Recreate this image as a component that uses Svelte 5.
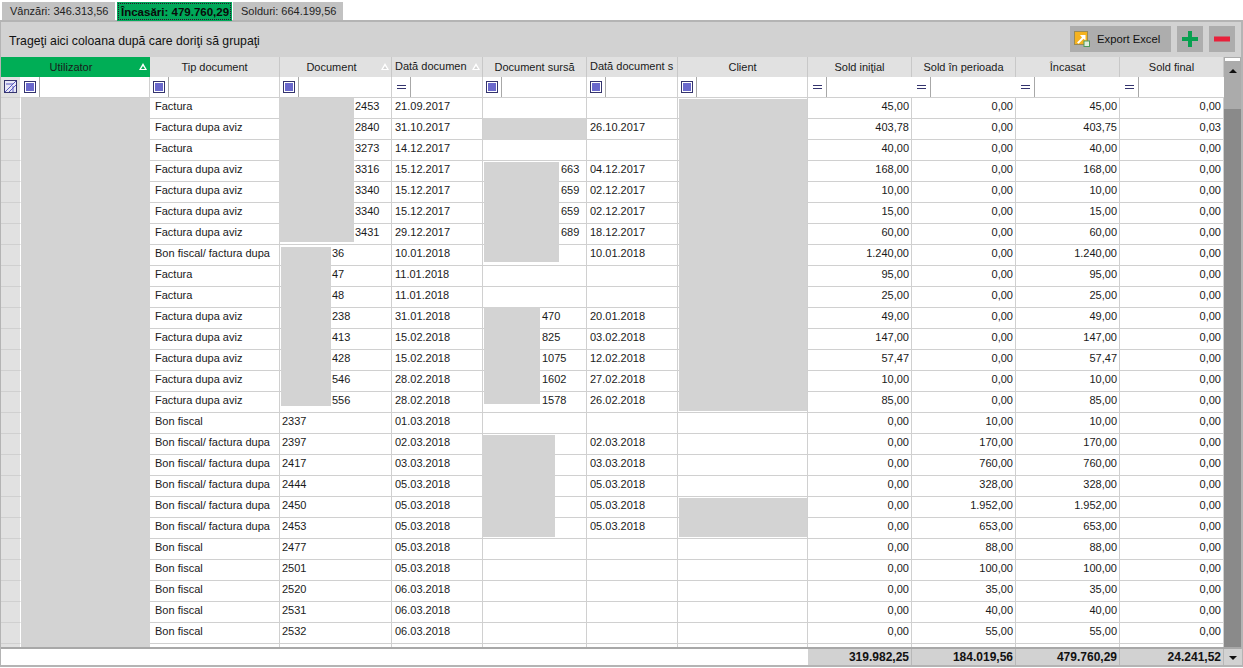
<script>
    // tip, document, padding of the number, date, source doc, its padding, source date, then the four amounts
    const rows = [
        ['Factura', '2453', 74, '21.09.2017', '', 0, '', '45,00', '0,00', '45,00', '0,00'],
        ['Factura dupa aviz', '2840', 74, '31.10.2017', '', 0, '26.10.2017', '403,78', '0,00', '403,75', '0,03'],
        ['Factura', '3273', 74, '14.12.2017', '', 0, '', '40,00', '0,00', '40,00', '0,00'],
        ['Factura dupa aviz', '3316', 74, '15.12.2017', '663', 77, '04.12.2017', '168,00', '0,00', '168,00', '0,00'],
        ['Factura dupa aviz', '3340', 74, '15.12.2017', '659', 77, '02.12.2017', '10,00', '0,00', '10,00', '0,00'],
        ['Factura dupa aviz', '3340', 74, '15.12.2017', '659', 77, '02.12.2017', '15,00', '0,00', '15,00', '0,00'],
        ['Factura dupa aviz', '3431', 74, '29.12.2017', '689', 77, '18.12.2017', '60,00', '0,00', '60,00', '0,00'],
        ['Bon fiscal/ factura dupa', '36', 51, '10.01.2018', '', 0, '10.01.2018', '1.240,00', '0,00', '1.240,00', '0,00'],
        ['Factura', '47', 51, '11.01.2018', '', 0, '', '95,00', '0,00', '95,00', '0,00'],
        ['Factura', '48', 51, '11.01.2018', '', 0, '', '25,00', '0,00', '25,00', '0,00'],
        ['Factura dupa aviz', '238', 51, '31.01.2018', '470', 58, '20.01.2018', '49,00', '0,00', '49,00', '0,00'],
        ['Factura dupa aviz', '413', 51, '15.02.2018', '825', 58, '03.02.2018', '147,00', '0,00', '147,00', '0,00'],
        ['Factura dupa aviz', '428', 51, '15.02.2018', '1075', 58, '12.02.2018', '57,47', '0,00', '57,47', '0,00'],
        ['Factura dupa aviz', '546', 51, '28.02.2018', '1602', 58, '27.02.2018', '10,00', '0,00', '10,00', '0,00'],
        ['Factura dupa aviz', '556', 51, '28.02.2018', '1578', 58, '26.02.2018', '85,00', '0,00', '85,00', '0,00'],
        ['Bon fiscal', '2337', 1, '01.03.2018', '', 0, '', '0,00', '10,00', '10,00', '0,00'],
        ['Bon fiscal/ factura dupa', '2397', 1, '02.03.2018', '', 0, '02.03.2018', '0,00', '170,00', '170,00', '0,00'],
        ['Bon fiscal/ factura dupa', '2417', 1, '03.03.2018', '', 0, '03.03.2018', '0,00', '760,00', '760,00', '0,00'],
        ['Bon fiscal/ factura dupa', '2444', 1, '05.03.2018', '', 0, '05.03.2018', '0,00', '328,00', '328,00', '0,00'],
        ['Bon fiscal/ factura dupa', '2450', 1, '05.03.2018', '', 0, '05.03.2018', '0,00', '1.952,00', '1.952,00', '0,00'],
        ['Bon fiscal/ factura dupa', '2453', 1, '05.03.2018', '', 0, '05.03.2018', '0,00', '653,00', '653,00', '0,00'],
        ['Bon fiscal', '2477', 1, '05.03.2018', '', 0, '', '0,00', '88,00', '88,00', '0,00'],
        ['Bon fiscal', '2501', 1, '05.03.2018', '', 0, '', '0,00', '100,00', '100,00', '0,00'],
        ['Bon fiscal', '2520', 1, '06.03.2018', '', 0, '', '0,00', '35,00', '35,00', '0,00'],
        ['Bon fiscal', '2531', 1, '06.03.2018', '', 0, '', '0,00', '40,00', '40,00', '0,00'],
        ['Bon fiscal', '2532', 1, '06.03.2018', '', 0, '', '0,00', '55,00', '55,00', '0,00'],
        ['Bon fiscal/ factura dupa', '', 1, '', '', 0, '', '', '', '', '']
    ];

    const filters = ['box', 'box', 'box', 'eq', 'box', 'box', 'box', 'eq', 'eq', 'eq', 'eq'];

    // grey blocks that hide names, in page coordinates: x1, y1, x2, y2
    const hidden = [
        [21, 98, 150, 648],
        [279, 98, 354, 242],
        [281, 247, 331, 406],
        [483, 118, 586, 140],
        [484, 162, 559, 262],
        [484, 307, 540, 404],
        [482, 435, 555, 537],
        [679, 99, 807, 411],
        [679, 498, 807, 537]
    ];
</script>

<div class="page">
    <div class="tabs">
        <div class="tab">Vânzări: 346.313,56</div>
        <div class="tab active"><span class="focus">Încasări: 479.760,29</span></div>
        <div class="tab">Solduri: 664.199,56</div>
    </div>

    <div class="panel">
        <div class="toolbar">
            <span class="hint">Trageţi aici coloana după care doriţi să grupaţi</span>
            <div class="btn export">
                <svg width="16" height="16" viewBox="0 0 16 16">
                    <rect x="0.5" y="0.5" width="13" height="13" fill="#f5b21e" stroke="#9a8a55"/>
                    <path d="M3 11.5 L8 6.5 L6 4 H11.5 V9.5 L9.5 7.8 L4.6 12.8 Z" fill="#fff"/>
                    <rect x="10" y="10" width="5.5" height="5.5" fill="#dfeedd" stroke="#4f9a5a"/>
                </svg>
                <span>Export Excel</span>
            </div>
            <div class="btn square">
                <svg width="16" height="16" viewBox="0 0 16 16"><path d="M6 0 H10 V6 H16 V10 H10 V16 H6 V10 H0 V6 H6 Z" fill="#08a050"/></svg>
            </div>
            <div class="btn square">
                <svg width="16" height="6" viewBox="0 0 16 6"><rect y="0.5" width="16" height="5" fill="#e8203a"/></svg>
            </div>
        </div>

        <div class="gridwrap">
            <div class="grid">
                <div class="row head">
                    <div class="h sel span2"><span>Utilizator</span><i class="tri"></i></div>
                    <div class="h"><span>Tip document</span></div>
                    <div class="h pushed"><span>Document</span><i class="tri"></i></div>
                    <div class="h left"><span>Dată documen</span><i class="tri"></i></div>
                    <div class="h"><span>Document sursă</span></div>
                    <div class="h left"><span>Dată document s</span></div>
                    <div class="h"><span>Client</span></div>
                    <div class="h"><span>Sold iniţial</span></div>
                    <div class="h"><span>Sold în perioada</span></div>
                    <div class="h"><span>Încasat</span></div>
                    <div class="h"><span>Sold final</span></div>
                </div>

                <div class="row filter">
                    <div class="f corner">
                        <svg width="14" height="14" viewBox="0 0 14 14">
                            <rect x="0.5" y="0.5" width="12" height="12" fill="#e8e8f6" stroke="#34346e"/>
                            <path d="M1 12 L12 1 M5 12 L12 5 M2 4 H9 M9 12 V6" stroke="#5a5ac0" fill="none"/>
                        </svg>
                    </div>
                    {#each filters as kind}
                        <div class="f">
                            <div class="fbtn">
                                {#if kind === 'box'}
                                    <span class="box"></span>
                                {:else}
                                    <span class="eq"></span>
                                {/if}
                            </div>
                        </div>
                    {/each}
                </div>

                <div class="body">
                    {#each rows as r}
                        <div class="row line">
                            <div class="c mark"></div>
                            <div class="c"></div>
                            <div class="c"><span>{r[0]}</span></div>
                            <div class="c" style="padding-left: {r[2] + 1}px"><span>{r[1]}</span></div>
                            <div class="c"><span>{r[3]}</span></div>
                            <div class="c" style="padding-left: {r[5] + 1}px"><span>{r[4]}</span></div>
                            <div class="c"><span>{r[6]}</span></div>
                            <div class="c"></div>
                            <div class="c num"><span>{r[7]}</span></div>
                            <div class="c num"><span>{r[8]}</span></div>
                            <div class="c num"><span>{r[9]}</span></div>
                            <div class="c num"><span>{r[10]}</span></div>
                        </div>
                    {/each}
                    {#each hidden as b}
                        <div class="mask" style="left: {b[0] - 1}px; top: {b[1] - 98}px; width: {b[2] - b[0]}px; height: {b[3] - b[1]}px"></div>
                    {/each}
                </div>
            </div>

            <div class="scroll">
                <div class="track">
                    <div class="stripe"></div>
                    <i class="arrow up"></i>
                </div>
                <div class="thumb"></div>
            </div>
        </div>

        <div class="footer">
            <div class="blank"></div>
            <div class="t">319.982,25</div>
            <div class="t">184.019,56</div>
            <div class="t">479.760,29</div>
            <div class="t">24.241,52</div>
            <div class="down"><i class="arrow dn"></i></div>
        </div>
    </div>
</div>

<style>
    :global(body) {
        background: #fff;
    }
    .page {
        width: 1243px;
        height: 668px;
        overflow: hidden;
        display: flex;
        flex-direction: column;
        font-family: "Liberation Sans", Arial, sans-serif;
        font-size: 11px;
        color: #111;
    }
    .tabs {
        display: flex;
        height: 18px;
        margin-top: 2px;
        padding-left: 2px;
        gap: 1px;
    }
    .tab {
        width: 113px;
        background: #c2c2c2;
        font-size: 11px;
        line-height: 19px;
        padding-left: 8px;
        box-sizing: border-box;
        white-space: nowrap;
        color: #222;
    }
    .tab.active {
        width: 115px;
        margin-left: 1px;
        height: 19px;
        background: #00a859;
        padding: 1px;
        font-size: 11.5px;
        font-weight: bold;
        color: #0a0a0a;
        position: relative;
        z-index: 1;
    }
    .focus {
        display: block;
        height: 17px;
        line-height: 16px;
        padding-left: 2px;
        border: 1px dotted #30102a;
        box-sizing: border-box;
        overflow: hidden;
    }
    .tab:last-child {
        width: 110px;
    }
    .panel {
        flex: 1;
        margin-bottom: 1px;
        border: solid #b4b4b4;
        border-width: 2px 2px 2px 1px;
        background: #d2d2d2;
        display: flex;
        flex-direction: column;
        min-height: 0;
    }
    .toolbar {
        height: 35px;
        flex: none;
        display: flex;
        align-items: flex-start;
        padding: 4px 6px 0 8px;
        box-sizing: border-box;
        gap: 6px;
    }
    .hint {
        flex: 1;
        font-size: 12.25px;
        line-height: 28px;
        padding-top: 1px;
    }
    .btn {
        height: 26px;
        background: #adadad;
        display: flex;
        align-items: center;
        justify-content: center;
    }
    .export {
        width: 101px;
        font-size: 11.25px;
        gap: 7px;
        box-sizing: border-box;
        justify-content: flex-start;
        padding-left: 4px;
    }
    .square {
        width: 26px;
    }
    .gridwrap {
        flex: 1;
        display: flex;
        min-height: 0;
    }
    .grid {
        width: 1223px;
        display: flex;
        flex-direction: column;
        min-height: 0;
    }
    .row {
        display: grid;
        grid-template-columns: 20px 129px 130px 112px 91px 104px 91px 130px 104px 104px 104px 104px;
    }
    .head {
        height: 20px;
        flex: none;
    }
    .h {
        position: relative;
        background: #e1e1e1;
        border-right: 1px solid #c8c8c8;
        display: flex;
        align-items: center;
        justify-content: center;
        overflow: hidden;
        white-space: nowrap;
        line-height: 18px;
        color: #1a1a1a;
    }
    .h span {
        padding-bottom: 1px;
    }
    .span2 {
        grid-column: span 2;
        background: #00ae56;
        padding-right: 8px;
        border-right: 1px solid #00ae56;
    }
    .pushed {
        padding-right: 8px;
    }
    .left {
        justify-content: flex-start;
        padding-left: 3px;
    }
    .left span {
        padding-bottom: 3px;
    }
    /* sort arrow: a white triangle with a small hole in the colour of the header */
    .tri {
        position: absolute;
        right: 2px;
        top: 6px;
        width: 0;
        height: 0;
        border-left: 4px solid transparent;
        border-right: 4px solid transparent;
        border-bottom: 7px solid #fff;
    }
    .tri::after {
        content: "";
        position: absolute;
        left: -2px;
        top: 3px;
        width: 0;
        height: 0;
        border-left: 2px solid transparent;
        border-right: 2px solid transparent;
        border-bottom: 3px solid #d4d4d4;
    }
    .sel .tri::after {
        border-bottom-color: #00ae56;
    }
    .filter {
        height: 20px;
        flex: none;
        background: #fff;
    }
    .f {
        border-right: 1px solid #d0d0d0;
        border-bottom: 1px solid #d0d0d0;
        box-sizing: border-box;
        height: 21px;
    }
    .f:nth-child(n + 9) {
        border-right: none;
    }
    .corner {
        background: #e1e1e1;
        padding: 3px 0 0 3px;
        border-right: 1px solid #fff;
    }
    .corner svg {
        display: block;
    }
    .fbtn {
        width: 18px;
        height: 100%;
        border-right: 1px solid #a8a8a8;
        display: flex;
        align-items: center;
        justify-content: center;
    }
    .box {
        width: 8px;
        height: 8px;
        background: #6a68cc;
        border: 1px solid #fff;
        outline: 1px solid #34346e;
    }
    .eq {
        width: 9px;
        height: 2px;
        border-top: 1px solid #34346e;
        border-bottom: 1px solid #34346e;
    }
    .body {
        flex: 1;
        position: relative;
        overflow: hidden;
        background: #fff;
        margin-top: 1px;
    }
    .line {
        height: 21px;
    }
    .c {
        border-right: 1px solid #d0d0d0;
        border-bottom: 1px solid #d0d0d0;
        box-sizing: border-box;
        overflow: hidden;
        white-space: nowrap;
        padding: 2px 1px 0 5px;
        line-height: 13px;
        color: #1a1a1a;
    }
    .c:nth-child(4) {
        padding-left: 2px;
    }
    .c:nth-child(5) {
        padding-left: 3px;
    }
    .c:nth-child(7) {
        padding-left: 3px;
    }
    .mark {
        background: #e1e1e1;
        border-right: 1px solid #fff;
        padding: 0;
    }
    .num {
        text-align: right;
        padding-right: 2px;
        padding-left: 0;
    }
    .mask {
        position: absolute;
        background: #d3d3d3;
    }
    .scroll {
        width: 18px;
        display: flex;
        flex-direction: column;
    }
    .track {
        height: 52px;
        background: #ababab;
        position: relative;
        flex: none;
    }
    .stripe {
        height: 3px;
        margin: 1px 1px 0;
        background: #fff;
    }
    .thumb {
        flex: 1;
        background: #8a8a8a;
    }
    .arrow {
        position: absolute;
        left: 5px;
        width: 0;
        height: 0;
        border-left: 4px solid transparent;
        border-right: 4px solid transparent;
    }
    .up {
        top: 12px;
        border-bottom: 4px solid #111;
    }
    .dn {
        top: 7px;
        border-top: 4px solid #111;
    }
    .footer {
        height: 18px;
        flex: none;
        box-sizing: border-box;
        display: grid;
        grid-template-columns: 807px 104px 104px 104px 104px 18px;
        border-top: 2px solid #a8a8a8;
    }
    .blank {
        background: #fff;
    }
    .t {
        background: #d2d2d2;
        border-right: 1px solid #b8b8b8;
        text-align: right;
        font-weight: bold;
        font-size: 12px;
        line-height: 16px;
        padding-right: 2px;
        box-sizing: border-box;
    }
    .down {
        position: relative;
        background: #d2d2d2;
    }
</style>
